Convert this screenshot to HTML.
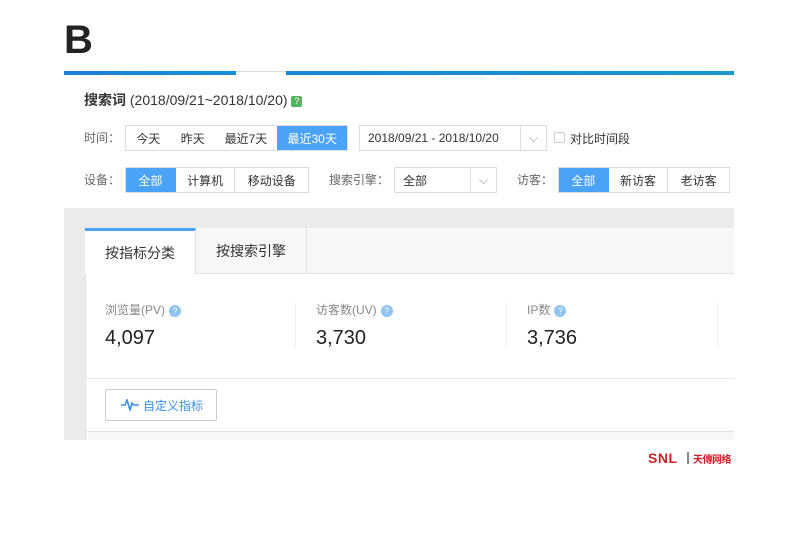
<!DOCTYPE html><html><head><meta charset="utf-8"><style>
*{margin:0;padding:0;box-sizing:border-box}
body{width:800px;height:540px;background:#fff;position:relative;font-family:"Liberation Sans","Noto Sans CJK SC",sans-serif;font-size:12px;color:#333;overflow:hidden}
.a{position:absolute}
.btn{position:absolute;height:26px;border:1px solid #ddd;display:flex;background:#fff}
.btn span{display:flex;align-items:center;justify-content:center;height:100%;border-right:1px solid #ddd;color:#333;font-size:12px}
.btn span:last-child{border-right:none}
.btn span.on{background:#4aa3f7;color:#fff;border-color:#4aa3f7}
.lab{color:#666;font-size:12px}
.sel{position:absolute;height:26px;border:1px solid #ddd;background:#fff;font-size:12px;display:flex;align-items:center;padding-left:8px}
.sel i{position:absolute;right:0;top:0;width:26px;height:24px;border-left:1px solid #ddd;display:flex;align-items:center;justify-content:center;color:#999;font-style:normal}
.q{display:inline-block;width:12px;height:12px;border-radius:50%;background:#8fc3f2;color:#fff;font-size:9px;text-align:center;line-height:12px;vertical-align:middle;margin-left:4px}
.ml{color:#888;font-size:12px}
.mv{font-size:20px;color:#222}
</style></head><body>
<div class="a" style="left:64px;top:18px;font-size:40px;font-weight:bold;color:#222;line-height:44px">B</div>
<div class="a" style="left:64px;top:71px;width:172px;height:4px;background:linear-gradient(90deg,#1a7fd6,#1890d8)"></div>
<div class="a" style="left:236px;top:71px;width:50px;height:1px;background:#ddd"></div>
<div class="a" style="left:286px;top:71px;width:448px;height:4px;background:linear-gradient(90deg,#1a86d6,#1996cc)"></div>
<div class="a" style="left:84px;top:90px;font-size:14px"><b style="font-weight:bold">搜索词</b> (2018/09/21~2018/10/20) <span style="display:inline-block;width:11px;height:11px;background:#4cb861;color:#fff;font-size:9px;text-align:center;line-height:11px;border-radius:2px;vertical-align:1px">?</span></div>
<div class="a lab" style="left:84px;top:129px">时间：</div>
<div class="btn" style="left:125px;top:125px;width:223px"><span style="width:45px;border:none">今天</span><span style="width:44px;border:none">昨天</span><span style="width:63px;border:none">最近7天</span><span class="on" style="width:70px">最近30天</span></div>
<div class="sel" style="left:359px;top:125px;width:188px">2018/09/21 - 2018/10/20<i>⌵</i></div>
<div class="a" style="left:554px;top:132px;width:11px;height:11px;border:1px solid #ccc;border-radius:2px"></div>
<div class="a" style="left:570px;top:130px;font-size:12px">对比时间段</div>
<div class="a lab" style="left:84px;top:171px">设备：</div>
<div class="btn" style="left:125px;top:167px;width:184px"><span class="on" style="width:50px">全部</span><span style="width:60px">计算机</span><span style="width:73px">移动设备</span></div>
<div class="a lab" style="left:329px;top:171px">搜索引擎：</div>
<div class="sel" style="left:394px;top:167px;width:103px">全部<i>⌵</i></div>
<div class="a lab" style="left:517px;top:171px">访客：</div>
<div class="btn" style="left:558px;top:167px;width:172px"><span class="on" style="width:50px">全部</span><span style="width:60px">新访客</span><span style="width:61px">老访客</span></div>
<div class="a" style="left:64px;top:208px;width:670px;height:232px;background:#ebebeb"></div>
<div class="a" style="left:85px;top:228px;width:649px;height:212px;background:#fff;border-left:1px solid #e2e2e2"></div>
<div class="a" style="left:85px;top:228px;width:649px;height:46px;background:#f7f7f7;border-bottom:1px solid #e2e2e2"></div>
<div class="a" style="left:85px;top:228px;width:111px;height:46px;background:#fff;border-top:3px solid #4aa3f7;border-right:1px solid #e2e2e2;font-size:14px;display:flex;align-items:center;justify-content:center">按指标分类</div>
<div class="a" style="left:196px;top:228px;width:111px;height:45px;border-right:1px solid #e2e2e2;font-size:14px;display:flex;align-items:center;justify-content:center">按搜索引擎</div>
<div class="a ml" style="left:105px;top:301px">浏览量(PV)<span class="q">?</span></div>
<div class="a mv" style="left:105px;top:327px">4,097</div>
<div class="a" style="left:295px;top:303px;width:1px;height:45px;background:#eee"></div>
<div class="a ml" style="left:316px;top:301px">访客数(UV)<span class="q">?</span></div>
<div class="a mv" style="left:316px;top:327px">3,730</div>
<div class="a" style="left:506px;top:303px;width:1px;height:45px;background:#eee"></div>
<div class="a ml" style="left:527px;top:301px">IP数<span class="q">?</span></div>
<div class="a mv" style="left:527px;top:327px">3,736</div>
<div class="a" style="left:717px;top:303px;width:1px;height:45px;background:#eee"></div>
<div class="a" style="left:86px;top:378px;width:648px;height:1px;background:#e8e8e8"></div>
<div class="a" style="left:105px;top:389px;width:112px;height:32px;border:1px solid #ccc;border-radius:2px;display:flex;align-items:center;padding-left:15px;color:#3a8ee6;font-size:12px"><svg width="18" height="12" viewBox="0 0 18 12" style="margin-right:4px"><path d="M0 6h4l2-5 3 10 2-7 1.5 2H18" fill="none" stroke="#3a8ee6" stroke-width="1.6"/></svg>自定义指标</div>
<div class="a" style="left:86px;top:431px;width:648px;height:9px;background:#f7f7f7;border-top:1px solid #e2e2e2"></div>
<div class="a" style="left:648px;top:450px;font-size:14px;font-weight:bold;color:#d0202a;letter-spacing:0.5px">SNL</div>
<div class="a" style="left:687px;top:452px;width:2px;height:12px;background:#888"></div>
<div class="a" style="left:693px;top:451px;font-size:10px;font-weight:bold;color:#d0202a;letter-spacing:-0.5px">天傳网络</div>
</body></html>
